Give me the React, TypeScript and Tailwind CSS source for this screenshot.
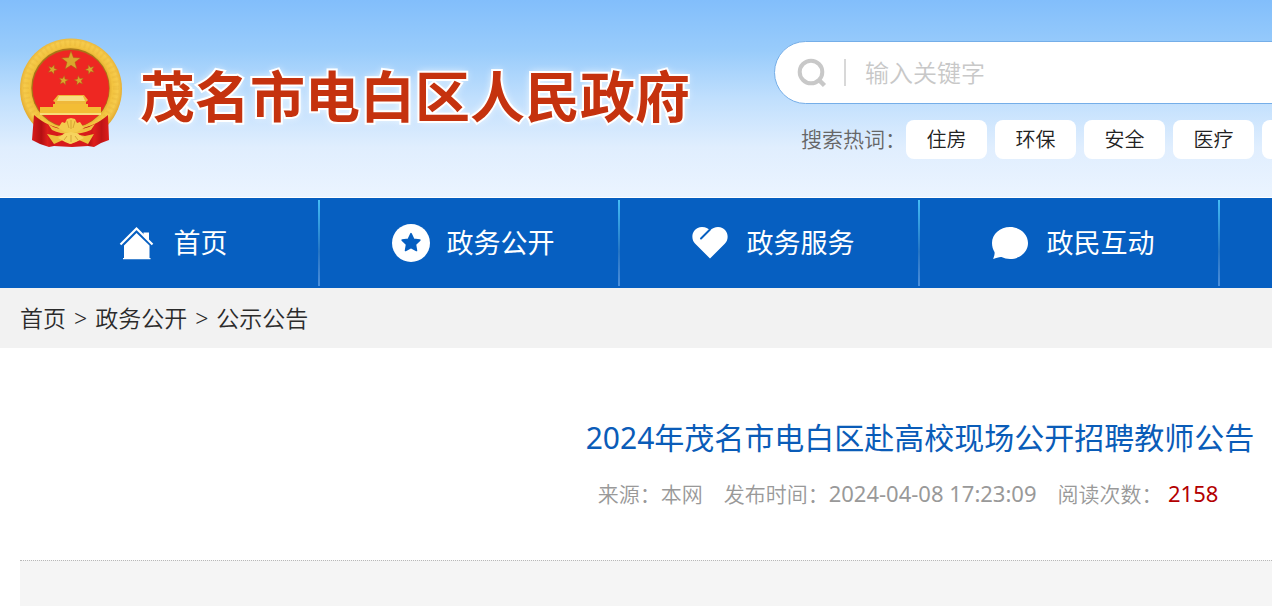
import type { ReactNode } from "react";

const hotWords = ["住房", "环保", "安全", "医疗"];

function star(cx: number, cy: number, r: number, turn = 0, inner = 0.42) {
  return Array.from({ length: 10 }, (_, i) => {
    const radius = i % 2 ? r * inner : r;
    const a = ((i * 36 - 90 + turn) * Math.PI) / 180;
    return `${(cx + radius * Math.cos(a)).toFixed(2)},${(cy + radius * Math.sin(a)).toFixed(2)}`;
  }).join(" ");
}

function Emblem() {
  return (
    <svg viewBox="0 0 102 110" className="h-[110px] w-[102px] shrink-0" aria-hidden="true">
      <defs>
        <radialGradient id="gold" cx="51" cy="50" r="52" gradientUnits="userSpaceOnUse">
          <stop offset="0.72" stopColor="#e0a92e" />
          <stop offset="0.8" stopColor="#f3c440" />
          <stop offset="0.9" stopColor="#f6cb4c" />
          <stop offset="1" stopColor="#e3a92e" />
        </radialGradient>
        <linearGradient id="drape" x1="0" x2="1">
          <stop offset="0" stopColor="#d81a1a" />
          <stop offset="0.3" stopColor="#b30f12" />
          <stop offset="0.5" stopColor="#de1f1c" />
          <stop offset="0.75" stopColor="#c01416" />
          <stop offset="1" stopColor="#dd1e1b" />
        </linearGradient>
      </defs>
      <path d="M51 .5C79 .5 102 23 102 51c0 15-6 27-14 36L66 98H36L14 87C6 78 0 66 0 51 0 23 23 .5 51 .5Z" fill="url(#gold)" />
      <circle cx="51" cy="50" r="45" fill="none" stroke="#c08a20" strokeWidth="6" strokeDasharray="2 3" opacity="0.1" />
      <ellipse cx="50.5" cy="50" rx="39.2" ry="39.7" fill="#a87518" />
      <ellipse cx="50.8" cy="50.5" rx="38.2" ry="38.5" fill="#ee2722" />
      <g fill="#d9a72c" stroke="#ae5d18" strokeWidth="0.5">
        <polygon points={star(51, 23, 10)} />
        <polygon points={star(32.5, 31.5, 5, 20)} />
        <polygon points={star(70, 31.5, 5, -20)} />
        <polygon points={star(43.5, 42.5, 5, 10)} />
        <polygon points={star(59, 42.5, 5, -10)} />
      </g>
      <path d="M38 57h26l4 5-2 2v5H35v-5l-2-1Z" fill="#efb83a" />
      <path d="M39 58h24l2 5H37Z" fill="#f8df82" />
      <path d="M33 66h35v3h13v7H20v-7h13Z" fill="#f3bd35" />
      <path d="M20 75h61v2H20Z" fill="#f8dc78" />
      <path d="M24 77h54c-6 7-15 12-27 12s-21-5-27-12Z" fill="#ed2923" />
      <path d="M14 77c9 8 19 12 29 14l-9 17-5 1-9-3-8-4Z" fill="url(#drape)" />
      <path d="M88 77c-9 8-19 12-29 14l9 17 6 1 7-4 8-3Z" fill="url(#drape)" />
      <path d="M30 93q21-5 42 0l-4 15-16 1-18-1Z" fill="#d71a1b" />
      <path d="M28 86q9 6 23 6t24-6l-4 6q-9 4-20 4t-19-4Z" fill="#f0bf40" />
      <path d="M38 90l4-6 3 1 2-4 4-1 4 1 2 4 3-1 4 6-7 4H45Z" fill="#f4cb4d" />
      <path d="M47 83l2 7m2-8v9m4-8-2 7" stroke="#b77818" strokeWidth="0.5" />
      <path d="M27 96l10 2 6-1 4-3h8l4 3 6 1 9-2-6 10-9-4-8 4-8-4-9 4Z" fill="#edc13c" />
      <path d="M38 100l7-5 6-1 6 1 7 5-8 4-6 2-5-2Z" fill="#f6d45d" />
      <path d="M44 102l3-4m4-1v7m4-6 3 4" stroke="#b8751a" strokeWidth="0.5" />
    </svg>
  );
}

const navItems: { label: string; icon: ReactNode }[] = [
  {
    label: "首页",
    icon: (
      <>
        <path d="M1.500 20.500 17.500 4.500 33.500 20.500" fill="none" stroke="#fff" strokeWidth="2.200" />
        <path d="M24.500 8.500h5.500v9l-5.500-5Z M17.500 9 30.500 21.500V34h1v1.300H4V34h1V21.500Z" />
      </>
    ),
  },
  {
    label: "政务公开",
    icon: (
      <>
        <circle cx="19" cy="19" r="19" />
        <polygon
          points={star(19, 19, 9.3, 0, 0.5)}
          fill="#065fc1"
          stroke="#065fc1"
          strokeWidth="1.6"
          strokeLinejoin="round"
        />
      </>
    ),
  },
  {
    label: "政务服务",
    icon: (
      <>
        <path d="M18 34.500 3 19.500C-2 14.500 0 3.500 10 3c4 0 6 1.500 8 3.500 2-2 5-3.500 8-3.500C36 3.500 38 14.500 33 19.500Z" />
        <path d="M17.500 6 9 14.500" stroke="#065fc1" strokeWidth="2" strokeLinecap="round" />
      </>
    ),
  },
  {
    label: "政民互动",
    icon: (
      <path d="M18 3C28 3 36 10 36 19s-8 16-18 16c-3 0-6-.8-8.500-2C7 32.800 4 34 1.500 35c-.5-.3 0-1 .3-2 .7-2 1-3.500.7-5C1 25.500 0 22.500 0 19 0 10 8 3 18 3Z" />
    ),
  },
];

export default function App() {
  return (
    <div className="min-h-screen overflow-hidden bg-white font-['Noto_Sans','Noto_Sans_CJK_SC',sans-serif]">
      <div className="flex min-h-screen min-w-[1840px] flex-col">
        <header className="flex h-[198px] items-start border-b border-white bg-[linear-gradient(to_bottom,#82befb_0%,#99ccfb_26%,#c0dffd_50%,#e0eefe_75%,#ebf4ff_100%)] px-5">
          <div className="flex items-start gap-[18px] pt-[38px]">
            <Emblem />
            <h1 className="pt-[18px] text-[55px] leading-[80px] font-bold whitespace-nowrap text-[#c5320e] [paint-order:stroke_fill] [-webkit-text-stroke:4px_white] [text-shadow:0_0_8px_white]">
              <a href="#">茂名市电白区人民政府</a>
            </h1>
          </div>
          <div className="ml-[84px] flex-1 pt-[41px]">
            <form className="flex h-[63px] items-center rounded-full border border-[#75aee8] bg-white pl-[22px]">
              <button type="button" aria-label="搜索">
                <svg viewBox="0 0 30 30" className="size-[30px]" fill="none" stroke="#c8c8c8">
                  <circle cx="14" cy="14" r="11.300" strokeWidth="4" />
                  <path d="m21 21 6.500 6.500" strokeWidth="4.500" />
                </svg>
              </button>
              <span className="ml-[17px] h-[27px] w-0.5 bg-[#d8d8d8]" />
              <input
                aria-label="输入关键字"
                placeholder="输入关键字"
                className="ml-[19px] min-w-0 flex-1 bg-transparent text-[24px] font-[350] outline-none placeholder:text-[#c8c8c8]"
              />
            </form>
            <div className="mt-4 ml-[27px] flex items-center">
              <span className="text-[21px] leading-[39px] font-[350] whitespace-nowrap text-[#666]">搜索热词：</span>
              <div className="flex gap-2">
                {hotWords.map((word) => (
                  <a
                    key={word}
                    href="#"
                    className="w-[81px] rounded-lg bg-white text-center text-[20px] leading-[39px] font-[350] text-[#222]"
                  >
                    {word}
                  </a>
                ))}
                <span className="w-[81px] rounded-lg bg-white" />
              </div>
            </div>
          </div>
        </header>

        <nav className="flex h-[90px] bg-[#065fc1] px-5">
          {navItems.map((item) => (
            <a key={item.label} href="#" className="flex w-[300px] items-center text-[27px] text-white">
              <span className="flex flex-1 items-center justify-center gap-[17px] pl-2">
                <svg viewBox="0 0 38 38" className="size-[38px] shrink-0" fill="#fff" aria-hidden="true">
                  {item.icon}
                </svg>
                {item.label}
              </span>
              <span className="h-[86px] w-0.5 bg-linear-to-b from-[#45bdf6] via-[#2474c4] via-60% to-[#4b8fdc]" />
            </a>
          ))}
        </nav>

        <nav aria-label="面包屑" className="flex h-[60px] items-center gap-2 bg-[#f2f2f2] px-5 text-[23px] font-[350] text-[#2b2b2b]">
          <a href="#">首页</a>
          <span>&gt;</span>
          <a href="#">政务公开</a>
          <span>&gt;</span>
          <a href="#">公示公告</a>
        </nav>

        <main className="flex flex-1 flex-col px-5 pt-[68px]">
          <h2 className="text-center text-[30px] leading-[44px] text-[#0a5cb8]">
            2024年茂名市电白区赴高校现场公开招聘教师公告
          </h2>
          <div className="mt-[18px] flex h-8 items-baseline justify-center gap-[21px] pr-6 text-[21px] leading-[30px] font-[350] text-[#999]">
            <span>来源：本网</span>
            <span>
              发布时间：<time className="text-[22px] font-normal">2024-04-08 17:23:09</time>
            </span>
            <span>
              阅读次数： <span className="text-[22px] font-normal text-[#b30000]">2158</span>
            </span>
          </div>
          <section className="mt-[50px] flex-1 border-t border-dotted border-[#b8b8b8] bg-[#f5f5f5]" />
        </main>
      </div>
    </div>
  );
}
